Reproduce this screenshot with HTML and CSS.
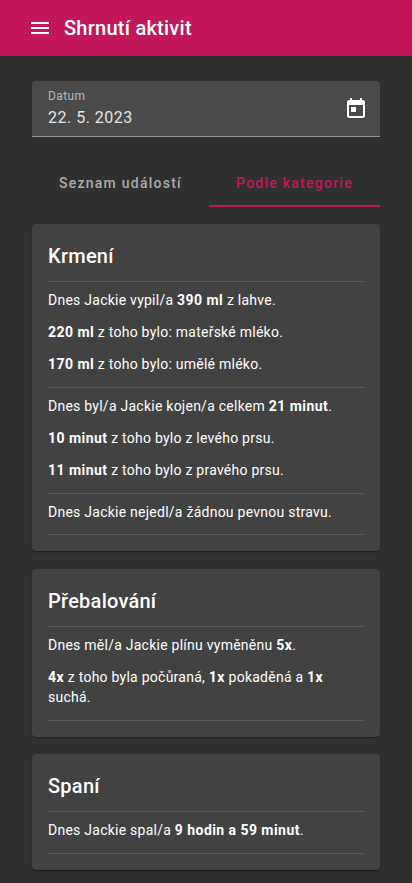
FILE: index.html
```
<!DOCTYPE html>
<html lang="cs">
<head>
<meta charset="utf-8">
<title>Shrnutí aktivit</title>
<link rel="stylesheet" href="styles.css">
</head>
<body>
<header class="toolbar">
  <svg class="icon" viewBox="0 0 24 24"><path d="M3 18h18v-2H3v2zm0-5h18v-2H3v2zm0-7v2h18V6H3z"/></svg>
  <h1>Shrnutí aktivit</h1>
</header>
<main>
  <div class="field">
    <div class="field-text"><label>Datum</label><span class="value">22. 5. 2023</span></div>
    <svg class="icon" viewBox="0 0 24 24"><path d="M19 3h-1V1h-2v2H8V1H6v2H5c-1.11 0-1.99.9-1.99 2L3 19c0 1.1.89 2 2 2h14c1.1 0 2-.9 2-2V5c0-1.1-.9-2-2-2zm0 16H5V8h14v11zM7 10h5v5H7z"/></svg>
  </div>
  <nav class="tabs">
    <div class="tab first">Seznam událostí</div>
    <div class="tab active">Podle kategorie</div>
  </nav>
  <section class="card feeding">
    <h2>Krmení</h2>
    <hr>
    <p>Dnes Jackie vypil/a <b>390 ml</b> z lahve.</p>
    <p><b>220 ml</b> z toho bylo: mateřské mléko.</p>
    <p><b>170 ml</b> z toho bylo: umělé mléko.</p>
    <hr>
    <p>Dnes byl/a Jackie kojen/a celkem <b>21 minut</b>.</p>
    <p><b>10 minut</b> z toho bylo z levého prsu.</p>
    <p><b>11 minut</b> z toho bylo z pravého prsu.</p>
    <hr>
    <p>Dnes Jackie nejedl/a žádnou pevnou stravu.</p>
    <hr>
  </section>
  <section class="card changing">
    <h2>Přebalování</h2>
    <hr>
    <p>Dnes měl/a Jackie plínu vyměněnu <b>5x</b>.</p>
    <p><b>4x</b> z toho byla počůraná, <b>1x</b> pokaděná a <b>1x</b> suchá.</p>
    <hr>
  </section>
  <section class="card sleep">
    <h2>Spaní</h2>
    <hr>
    <p>Dnes Jackie spal/a <b>9 hodin a 59 minut</b>.</p>
    <hr>
  </section>
</main>
</body>
</html>
```
FILE: styles.css
```
* { box-sizing: border-box; }
body { margin: 0; height: 883px; overflow: hidden; background: #303030; color: #fff; font: 400 14px/20px Roboto, sans-serif; letter-spacing: .25px; }
.icon { width: 24px; height: 24px; fill: currentColor; flex: none; }
.toolbar { height: 56px; padding: 0 28px; display: flex; align-items: center; gap: 12px; background: #c2185b; }
h1, h2 { margin: 0; font-size: 20px; font-weight: 500; line-height: 32px; letter-spacing: .25px; }
main { padding: 25px 32px 0; }
.field { height: 56px; padding: 0 12px 0 16px; display: flex; align-items: center; justify-content: space-between; background: #4a4a4a; border-bottom: 1px solid #979797; border-radius: 4px 4px 0 0; }
.field-text { display: flex; flex-direction: column; }
.field label { color: #b7b7b7; font-size: 12px; line-height: 16px; padding-bottom: 2px; letter-spacing: .4px; }
.value { color: #e4e4e4; font-size: 16px; line-height: 24px; letter-spacing: .5px; }
.tabs { height: 48px; margin-top: 22px; display: flex; }
.tab { flex: 1; display: flex; align-items: center; justify-content: center; color: #acacac; font-weight: 500; letter-spacing: 1.25px; }
.tab.first { flex: 0 0 177px; }
.tab.active { padding-top: 2px; color: #c2185b; border-bottom: 2px solid #c2185b; }
.card { padding: 16px; background: #424242; border-radius: 4px; box-shadow: 0 2px 1px -1px rgba(0,0,0,.2), 0 1px 1px rgba(0,0,0,.14), 0 1px 3px rgba(0,0,0,.12); }
.feeding { height: 327px; margin-top: 17px; }
.changing { height: 168px; margin-top: 18px; }
.sleep { height: 116px; margin-top: 17px; }
hr { height: 1px; margin: 9px 0 8px; border: 0; background: #5c5c5c; }
p { margin: 0 0 12px; }
p + hr { margin-top: 13px; }
.feeding hr:last-child { margin-top: 12px; }
b { font-weight: 700; letter-spacing: .45px; }
```
